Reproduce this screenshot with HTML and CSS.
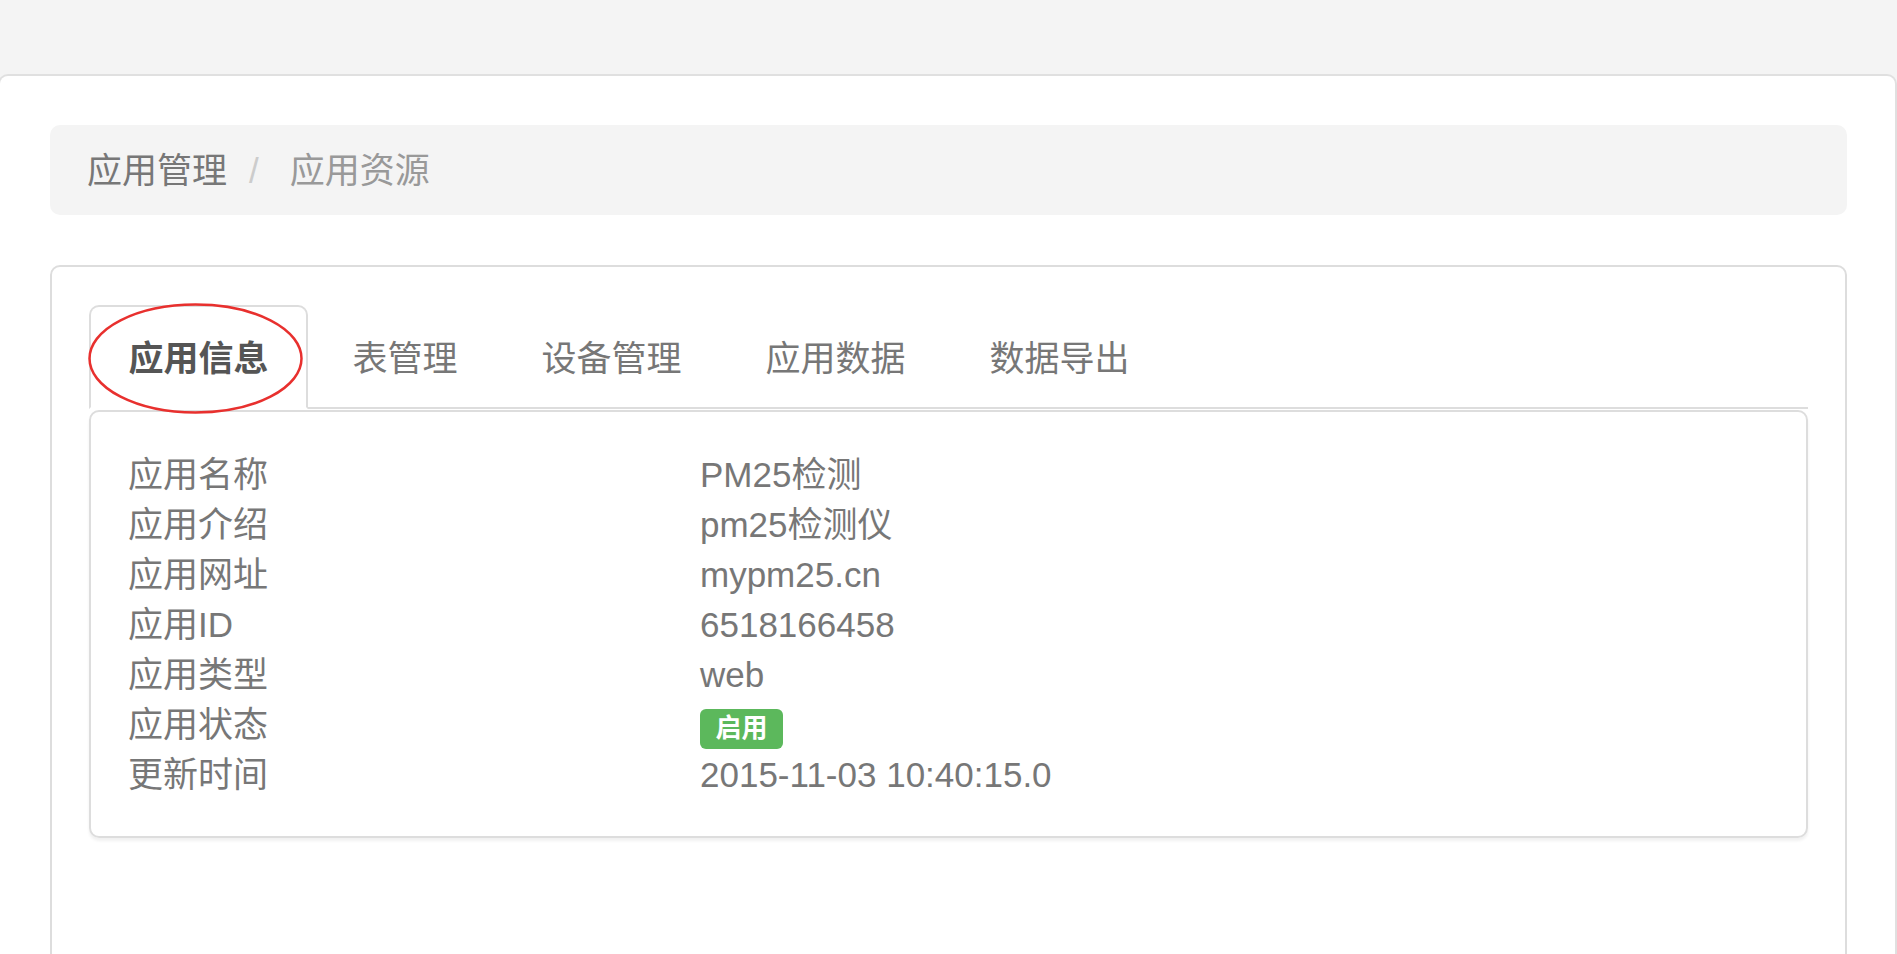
FILE: index.html
```html
<!DOCTYPE html>
<html>

<head>
    <title>应用资源</title>
    <meta charset="utf-8">
    <link rel="stylesheet" href="styles.css">
</head>

<body>
    <div class="page">
        <!-- breadcrumb -->
        <ol class="breadcrumb">
            <li>应用管理</li>
            <li class="sep">/</li>
            <li class="active">应用资源</li>
        </ol>

        <div class="card">
            <ul class="tabs">
                <li class="tab active">
                    应用信息
                    <svg class="mark" width="217" height="113" viewBox="0 0 217 113">
                        <ellipse cx="108.5" cy="56.5" rx="106" ry="54" fill="none" stroke="#e8302e" stroke-width="2.5" />
                    </svg>
                </li>
                <li class="tab">表管理</li>
                <li class="tab">设备管理</li>
                <li class="tab">应用数据</li>
                <li class="tab">数据导出</li>
            </ul>

            <div class="tab-content">
                <div class="info">
                    <div class="key">应用名称</div>
                    <div class="val">PM25检测</div>
                    <div class="key">应用介绍</div>
                    <div class="val">pm25检测仪</div>
                    <div class="key">应用网址</div>
                    <div class="val">mypm25.cn</div>
                    <div class="key">应用ID</div>
                    <div class="val">6518166458</div>
                    <div class="key">应用类型</div>
                    <div class="val">web</div>
                    <div class="key">应用状态</div>
                    <div class="val"><span class="label">启用</span></div>
                    <div class="key">更新时间</div>
                    <div class="val">2015-11-03 10:40:15.0</div>
                </div>
            </div>
        </div>
    </div>
</body>

</html>
```

FILE: styles.css
```css
html,
body {
    height: 954px;
    overflow: hidden;
}

body {
    margin: 0;
    padding: 0;
    background-color: #f4f4f4;
    font-family: "Liberation Sans", "Noto Sans CJK SC", sans-serif;
    font-size: 35px;
    line-height: 50px;
    color: #777;
}

.page {
    box-sizing: border-box;
    margin: 74px 0 0 -2px;
    height: 880px;
    overflow: hidden;
    background-color: #fff;
    border: 2px solid #e0e0e0;
    border-bottom: none;
    border-radius: 10px 10px 0 0;
    padding: 49px 48px 0 50px;
}

/* breadcrumb */
.breadcrumb {
    display: flex;
    margin: 0 0 50px 0;
    padding: 21px 37px 19px;
    list-style: none;
    background-color: #f4f4f4;
    border-radius: 10px;
}

.breadcrumb .sep {
    color: #ccc;
    margin: 0 31px 0 22px;
}

.breadcrumb .active {
    color: #999;
}

/* card with tabs */
.card {
    height: 700px;
    border: 2px solid #ddd;
    border-radius: 10px;
    padding: 38px 37px;
}

.tabs {
    display: flex;
    margin: 0;
    padding: 0;
    list-style: none;
    border-bottom: 2px solid #ddd;
}

.tab {
    position: relative;
    margin-right: 5px;
    margin-bottom: -2px;
    padding: 27px 37.5px 23px;
    border: 2px solid transparent;
    border-radius: 10px 10px 0 0;
    color: #777;
}

.tab.active {
    color: #555;
    font-weight: bold;
    background-color: #fff;
    border-color: #ddd #ddd #fff #ddd;
}

.mark {
    position: absolute;
    left: -4px;
    top: -5px;
}

.tab-content {
    margin-top: 1px;
    border: 2px solid #ddd;
    border-radius: 10px;
    box-shadow: 0 3px 3px rgba(0, 0, 0, 0.06);
    padding: 38px 37px 36px 37px;
}

.info {
    display: grid;
    grid-template-columns: 1fr 2fr;
    margin: 0 -37.5px;
}

.key,
.val {
    padding: 0 37.5px;
}

.label {
    display: inline-block;
    padding: 6px 15.5px 8px;
    font-size: 26px;
    line-height: 1;
    font-weight: bold;
    color: #fff;
    background-color: #5cb85c;
    border-radius: 6px;
    vertical-align: baseline;
}
```
